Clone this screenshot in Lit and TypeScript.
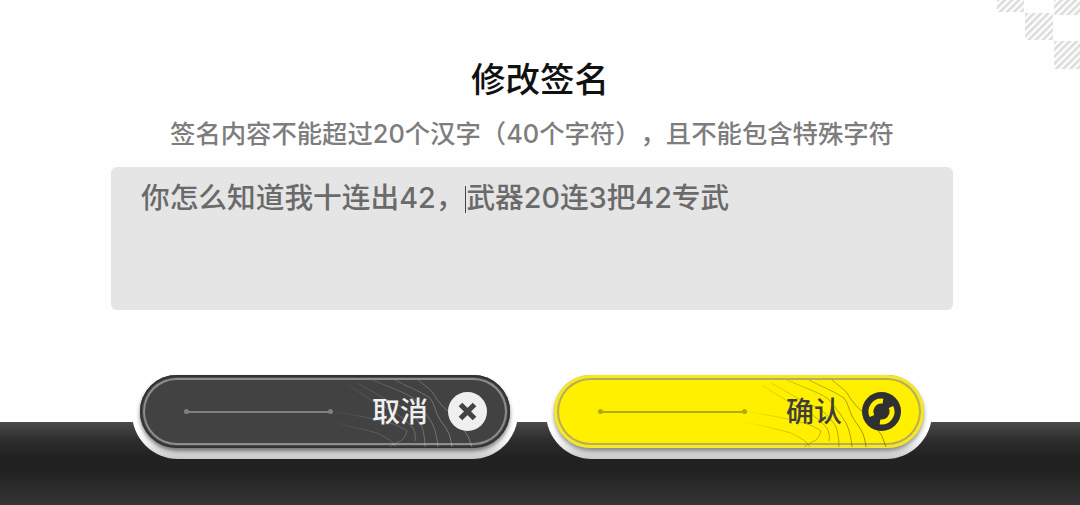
import { LitElement, html, css, svg } from "lit";
import { customElement } from "lit/decorators.js";

const contours = svg`
  <path d="M278 5C284 10 290 14 293 18C296 23 297 25 300 28C303 32 305 34 308 36C314 42 322 52 328 61L332 72"/>
  <path d="M255 5C266 11 280 16 290 23C294 28 295 35 298 41C301 47 305 51 307 55C310 60 311 65 312 72"/>
  <path d="M233 5C246 11 262 16 273 23C278 27 280 31 283 35C287 39 289 44 292 48C295 54 297 62 298 72"/>
  <path d="M217 8C226 13 235 18 243 23C252 27 260 31 267 35C271 38 274 41 277 45C280 48 282 51 283 55C284 60 285 65 285 72"/>
  <path d="M208 10C216 15 226 22 235 27C242 31 248 34 253 36C260 41 268 47 273 53C275 57 276 61 275 66"/>
  <path d="M190 36C208 39 232 43 250 48C257 50 263 53 267 56C266 60 264 63 262 65C258 67 254 69 250 72"/>
  <path d="M190 47C206 50 222 54 237 58C243 61 249 64 253 68L256 72"/>
`;

@customElement("action-button")
class ActionButton extends LitElement {
  static properties = { label: {}, kind: {} };
  label = "";
  kind = "cancel";

  static styles = css`
    :host { display: block; width: 386px; flex: none; }
    .notch {
      padding: 8px 8px 11px;
      border-radius: 46px;
      background: linear-gradient(to bottom, #fff 0, #fff 68%, #f4f4f4 82%, #c8c8c8 100%);
    }
    .btn {
      position: relative;
      overflow: hidden;
      display: flex;
      align-items: center;
      box-sizing: border-box;
      height: 73px;
      padding-left: 46px;
      border-radius: 37px;
    }
    .wrap { border-radius: 37px; }
    .cancel .wrap { box-shadow: 0 3px 4px rgba(0,0,0,.5); }
    .confirm .wrap { box-shadow: 0 3px 4px rgba(60,60,60,.55); }
    .cancel .btn {
      background: #424242;
      color: #efefef;
      box-shadow: inset 0 0 0 2px #333, inset 0 0 0 3px #4c4c4c, inset 0 0 0 5px #8c8c8c;
    }
    .confirm .btn {
      background: #fff000;
      color: #3e3e3e;
      box-shadow: inset 0 0 0 3px #f6e824, inset 0 0 0 5px #b8ad5a;
    }
    .contours {
      position: absolute;
      inset: 0;
      width: 100%;
      height: 100%;
      fill: none;
      stroke-width: 1;
      -webkit-mask-image: linear-gradient(to right, transparent 50%, rgba(0,0,0,.5) 65%, #000 85%);
      mask-image: linear-gradient(to right, transparent 50%, rgba(0,0,0,.5) 65%, #000 85%);
    }
    .cancel .contours { stroke: rgba(255,255,255,.3); }
    .confirm .contours { stroke: rgba(110,100,0,.65); }
    .line {
      position: relative;
      width: 145px;
      height: 2px;
      flex: none;
    }
    .cancel .line { background: #808080; }
    .confirm .line { background: #b5a90a; }
    .line::before, .line::after {
      content: "";
      position: absolute;
      top: -1.5px;
      width: 5px;
      height: 5px;
      border-radius: 50%;
      background: inherit;
    }
    .line::before { left: -2px; }
    .line::after { right: -2px; }
    .label {
      position: relative;
      margin-left: 41px;
      width: 57px;
      font-size: 28px;
      line-height: 36px;
      font-weight: 500;
      white-space: nowrap;
      flex: none;
    }
    .icon {
      position: relative;
      margin-left: 19px;
      width: 39px;
      height: 39px;
      flex: none;
      display: block;
    }
  `;

  render() {
    const cancel = this.kind === "cancel";
    return html`
      <div class="notch ${this.kind}">
        <div class="wrap">
          <div class="btn">
            <svg class="contours" viewBox="0 0 370 73">${contours}</svg>
            <span class="line"></span>
            <span class="label">${this.label}</span>
            ${cancel
              ? html`<svg class="icon" viewBox="0 0 39 39">
                  <circle cx="19.5" cy="19.5" r="19.5" fill="#efefef"/>
                  <path d="M12.5 12.5L26.5 26.5M26.5 12.5L12.5 26.5" stroke="#434343" stroke-width="5.2" fill="none"/>
                </svg>`
              : html`<svg class="icon" viewBox="0 0 39 39">
                  <circle cx="19.5" cy="19.5" r="19.5" fill="#303030"/>
                  <path d="M21 9.1A10.5 10.5 0 0 0 10 24M18 29.9A10.5 10.5 0 0 0 29 15" stroke="#fff000" stroke-width="5" fill="none"/>
                </svg>`}
          </div>
        </div>
      </div>
    `;
  }
}

@customElement("app-root")
class AppRoot extends LitElement {
  static styles = css`
    :host {
      display: block;
      width: 1080px;
      height: 505px;
      font-family: Inter, "Noto Sans CJK SC", "Noto Sans", sans-serif;
      text-spacing-trim: space-all;
    }
    .page {
      position: relative;
      display: flex;
      flex-direction: column;
      align-items: center;
      width: 1080px;
      height: 505px;
      overflow: hidden;
      background: #fefefe;
    }
    .hatch {
      position: absolute;
      top: 0;
      right: 0;
      width: 84px;
      height: 70px;
    }
    .title {
      margin: 58px 0 0;
      font-size: 34.5px;
      line-height: 44px;
      font-weight: 500;
      color: #111;
    }
    .sub {
      margin: 14px 16px 0 0;
      font-size: 25.35px;
      line-height: 36px;
      font-weight: 500;
      color: #7d7d7d;
      white-space: nowrap;
    }
    .input {
      box-sizing: border-box;
      align-self: flex-start;
      width: 842px;
      height: 143px;
      margin: 15px 0 0 111px;
      padding: 12px 30px;
      border-radius: 6px;
      background: #e6e5e6;
      color: #6a6a6a;
      font-size: 28.7px;
      line-height: 38px;
      font-weight: 500;
      white-space: nowrap;
    }
    .caret {
      display: inline-block;
      width: 1px;
      height: 27px;
      margin: 0 0 0 1px;
      background: #444;
      vertical-align: -5px;
    }
    .footer {
      display: flex;
      justify-content: flex-start;
      gap: 28px;
      box-sizing: border-box;
      width: 1080px;
      height: 138px;
      padding-left: 132px;
      margin-top: auto;
      background: linear-gradient(to bottom, transparent 0, transparent 55px, #4a4a4a 55px, #2c2c2c 74px, #212121 92px, #222 105px, #353535 138px);
    }
  `;

  render() {
    return html`
      <div class="page">
        <svg class="hatch" viewBox="0 0 84 70">
          <defs>
            <pattern id="h" width="5" height="5" patternUnits="userSpaceOnUse" patternTransform="rotate(45)">
              <rect width="2.6" height="5" fill="#dcdcdc"/>
            </pattern>
          </defs>
          <rect x="1" y="0" width="27" height="12" fill="url(#h)"/>
          <rect x="29" y="13" width="28" height="27" fill="url(#h)"/>
          <rect x="58" y="0" width="26" height="15" fill="url(#h)"/>
          <rect x="58" y="41" width="26" height="28" fill="url(#h)"/>
        </svg>
        <h1 class="title">修改签名</h1>
        <p class="sub">签名内容不能超过20个汉字（40个字符），且不能包含特殊字符</p>
        <div class="input">你怎么知道我十连出42，<span class="caret"></span>武器20连3把42专武</div>
        <div class="footer">
          <action-button label="取消" kind="cancel"></action-button>
          <action-button label="确认" kind="confirm"></action-button>
        </div>
      </div>
    `;
  }
}
